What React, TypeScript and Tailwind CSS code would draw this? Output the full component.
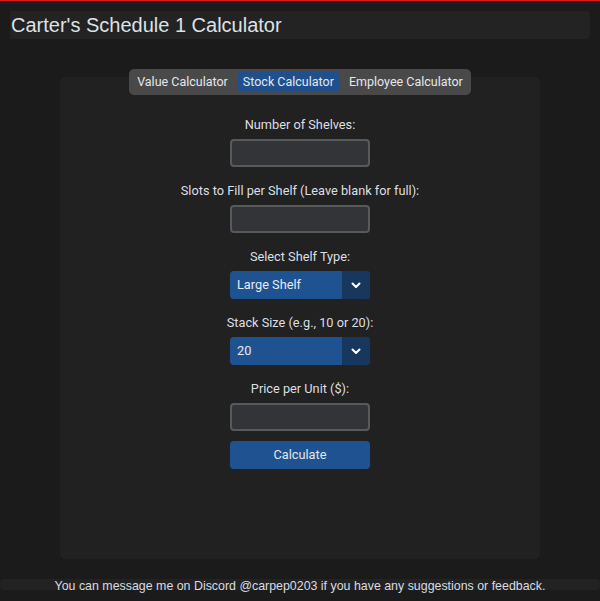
import React, { useState } from 'react';

const Chevron = () => (
  <svg width="10" height="7" viewBox="0 0 10 7" fill="none">
    <path d="M1.5 1.5 L5 5 L8.5 1.5" stroke="#ffffff" strokeWidth="2" strokeLinecap="round" strokeLinejoin="round" />
  </svg>
);

const Field = ({ label, last }: { label: string; last?: boolean }) => (
  <div className={last ? 'flex flex-col items-center mb-[10px]' : 'flex flex-col items-center mb-[15px]'}>
    <label className="h-[18px] leading-[18px] mb-[5px] text-[12.75px] text-[#dcdfe3]">{label}</label>
    <input
      type="text"
      className="w-[140px] h-[28px] rounded-[4px] border-2 border-[#58595b] bg-[#333437] px-2 text-[13px] text-white outline-none"
    />
  </div>
);

const SelectField = ({ label, value, options }: { label: string; value: string; options: string[] }) => (
  <div className="flex flex-col items-center mb-[15px]">
    <label className="h-[18px] leading-[18px] mb-[5px] text-[12.75px] text-[#dcdfe3]">{label}</label>
    <div className="flex w-[140px] h-[28px] rounded-[4px] overflow-hidden bg-[#1f5291]">
      <div className="flex-1 flex items-center pl-[7px] text-[12.75px] text-[#e6ebf2]">{value}</div>
      <div className="w-[28px] flex items-center justify-center bg-[#17375f]">
        <Chevron />
      </div>
      <select className="hidden" defaultValue={value}>
        {options.map(o => <option key={o}>{o}</option>)}
      </select>
    </div>
  </div>
);

export default function App() {
  const [tab, setTab] = useState('Stock Calculator');
  const tabs = ['Value Calculator', 'Stock Calculator', 'Employee Calculator'];

  return (
    <div className="w-[600px] h-[601px] bg-[#1b1b1b] border-t border-[#e3141d] flex flex-col font-['Roboto',sans-serif]">
      <div className="mt-[10px] mx-[10px] h-[28px] rounded-r-[4px] bg-[#232323] flex items-center">
        <h1 className="pl-[1px] text-[20px] leading-[28px] text-[#dde1e6] font-['Liberation_Sans',Arial,sans-serif]">
          Carter's Schedule 1 Calculator
        </h1>
      </div>

      <div className="mt-[30px] flex justify-center relative z-10">
        <div className="flex gap-[5px] p-[3px] rounded-[5px] bg-[#494949]">
          {tabs.map(t => (
            <button
              key={t}
              onClick={() => setTab(t)}
              className={
                t === tab
                  ? 'h-[20px] px-[5px] rounded-[2px] bg-[#1f4f8c] text-[12.5px] leading-[20px] text-[#e3e7ec]'
                  : 'h-[20px] px-[5px] rounded-[2px] text-[12.5px] leading-[20px] text-[#e3e7ec]'
              }
            >
              {t}
            </button>
          ))}
        </div>
      </div>

      <div className="mx-[60px] -mt-[18px] h-[482px] rounded-[5px] bg-[#212121] pt-[39px] flex flex-col items-center">
        <Field label="Number of Shelves:" />
        <Field label="Slots to Fill per Shelf (Leave blank for full):" />
        <SelectField label="Select Shelf Type:" value="Large Shelf" options={['Small Shelf', 'Medium Shelf', 'Large Shelf']} />
        <SelectField label="Stack Size (e.g., 10 or 20):" value="20" options={['10', '20']} />
        <Field label="Price per Unit ($):" last />
        <button className="w-[140px] h-[28px] rounded-[4px] bg-[#1f5291] text-[12.75px] text-[#e3e7ec]">Calculate</button>
      </div>

      <div className="mt-[20px] h-[11px] rounded-[4px] bg-[#222222] flex justify-center">
        <p className="text-[12.4px] leading-[13px] mt-[1px] text-[#d8dce1] font-['Liberation_Sans',Arial,sans-serif]">
          You can message me on Discord @carpep0203 if you have any suggestions or feedback.
        </p>
      </div>
    </div>
  );
}
